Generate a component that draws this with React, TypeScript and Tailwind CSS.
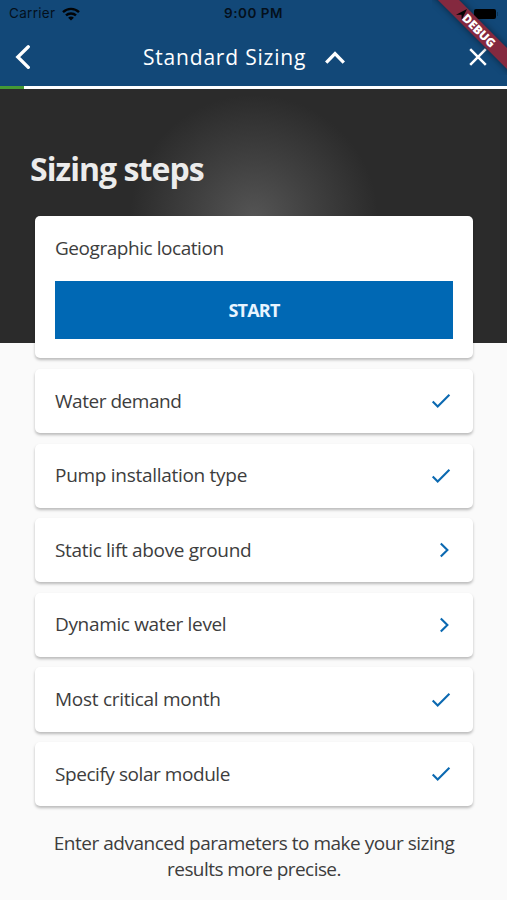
const STEPS = [
  { label: "Water demand", done: true, tracking: "tracking-[-0.47px]" },
  { label: "Pump installation type", done: true, tracking: "tracking-[-0.29px]" },
  { label: "Static lift above ground", done: false, tracking: "tracking-[-0.33px]" },
  { label: "Dynamic water level", done: false, tracking: "tracking-[-0.34px]" },
  { label: "Most critical month", done: true, tracking: "tracking-[-0.28px]" },
  { label: "Specify solar module", done: true, tracking: "tracking-[-0.44px]" },
];

function StatusBar() {
  return (
    <div className="flex h-7 items-center font-['Inter',sans-serif] text-[13.5px] leading-none text-[#04101c]">
      <div className="flex flex-1 items-center gap-[7px] pl-[9px]">
        <span className="tracking-[0.3px]">Carrier</span>
        <svg width="18" height="14" viewBox="0 0 18 14" fill="none" stroke="#020406" strokeWidth="2.4">
          <path d="M1 5.1C5.5.8 12.5.8 17 5.1" />
          <path d="M4 8.4c2.8-2.6 7.2-2.6 10 0" />
          <path d="M9 13.6 6.1 10.7c1.6-1.5 4.2-1.5 5.8 0Z" fill="#020406" stroke="none" />
        </svg>
      </div>
      <span className="font-semibold tracking-[0.5px]">9:00 PM</span>
      <div className="flex flex-1 items-center justify-end gap-[7px] pr-[9px]">
        <svg className="relative z-10" width="11" height="11" viewBox="0 0 11 11" fill="#020406">
          <path d="M11 0 0 5.8h5.6V11Z" />
        </svg>
        <div className="flex items-center gap-px">
          <div className="h-[10px] w-[22px] rounded-[2px] bg-black" />
          <div className="h-1 w-px bg-[#0d3558]" />
        </div>
      </div>
    </div>
  );
}

function NavBar() {
  return (
    <div className="flex h-[58px] items-center pr-[20px] pl-[15px] text-white">
      <svg width="16" height="24" viewBox="0 0 16 24" fill="none" stroke="currentColor" strokeWidth="3.3" strokeLinecap="round">
        <path d="M13.3 1.8 2.8 12l10.5 10.4" />
      </svg>
      <div className="flex flex-1 items-center gap-[19px] pl-[112px]">
        <h1 className="text-[21px] leading-none tracking-[0.8px] whitespace-nowrap">Standard Sizing</h1>
        <svg width="20" height="13" viewBox="0 0 20 13" fill="none" stroke="currentColor" strokeWidth="3.3">
          <path d="M1.2 11.7 10 2.7l8.8 9" />
        </svg>
      </div>
      <svg width="18" height="18" viewBox="0 0 18 18" fill="none" stroke="currentColor" strokeWidth="2.5">
        <path d="m1.2 1.2 15.6 15.6M16.8 1.2 1.2 16.8" />
      </svg>
    </div>
  );
}

function DebugBanner() {
  return (
    <div className="absolute top-0 right-0 size-[75px] overflow-hidden">
      <div className="absolute top-[23px] left-[-18px] flex h-[15px] w-[130px] rotate-45 items-center justify-center bg-[#84293f] text-[12px] leading-none font-extrabold text-white shadow-[0_0_7px_rgba(0,0,0,0.5)]">
        DEBUG
      </div>
    </div>
  );
}

function StepIcon({ done }: { done: boolean }) {
  if (done) {
    return (
      <svg width="20" height="16" viewBox="0 0 20 16" fill="none" stroke="#0b69b1" strokeWidth="2.1">
        <path d="m1.7 8.4 5 5.1L18.4 1.8" />
      </svg>
    );
  }
  return (
    <svg width="20" height="16" viewBox="0 0 20 16" fill="none" stroke="#0b69b1" strokeWidth="2.1">
      <path d="m9.8 1.4 6.6 6.6-6.6 6.6" />
    </svg>
  );
}

function StepRow({ label, done, tracking }: { label: string; done: boolean; tracking: string }) {
  return (
    <li className="flex h-[64.3px] items-center justify-between rounded-[5px] bg-white pr-[22px] pl-5 shadow-[0_2px_3px_rgba(0,0,0,0.26)]">
      <span className={`leading-none whitespace-nowrap ${tracking}`}>{label}</span>
      <StepIcon done={done} />
    </li>
  );
}

export default function App() {
  return (
    <div className="relative h-[900px] w-full overflow-hidden bg-[#fafafa] font-['Open_Sans',sans-serif] text-[19px] text-[#3d3d3d]">
      <header className="bg-[#124878]">
        <StatusBar />
        <NavBar />
        <div className="h-[3px] bg-white">
          <div className="h-full w-6 bg-[#459a35]" />
        </div>
      </header>

      <section className="h-[254px] bg-[#2b2b2b] bg-[radial-gradient(circle_at_254px_130px,#555_0px,#404040_60px,#2b2b2b_124px)] px-[30px] pt-[60px]">
        <h2 className="text-[32px] leading-[40px] font-bold tracking-[-0.95px] whitespace-nowrap text-[#ececec]">
          Sizing steps
        </h2>
      </section>

      <main className="relative -mt-[127px] pr-[34px] pl-[35px]">
        <div className="h-[142px] rounded-[5px] bg-white px-5 pt-[22px] shadow-[0_2px_3px_rgba(0,0,0,0.26)]">
          <p className="leading-[20px] tracking-[-0.45px]">Geographic location</p>
          <button className="mt-[23px] flex h-[58px] w-full items-center justify-center bg-[#0068b4] text-[18px] font-bold tracking-[-0.8px] text-[#e8f4ff]">
            START
          </button>
        </div>
        <ul className="mt-[11px] flex flex-col gap-[10.3px]">
          {STEPS.map((step) => (
            <StepRow key={step.label} {...step} />
          ))}
        </ul>
        <p className="mt-[24px] text-center leading-[26px] whitespace-nowrap">
          <span className="tracking-[-0.48px]">Enter advanced parameters to make your sizing</span>
          <br />
          <span className="tracking-[-0.57px]">results more precise.</span>
        </p>
      </main>

      <DebugBanner />
    </div>
  );
}
